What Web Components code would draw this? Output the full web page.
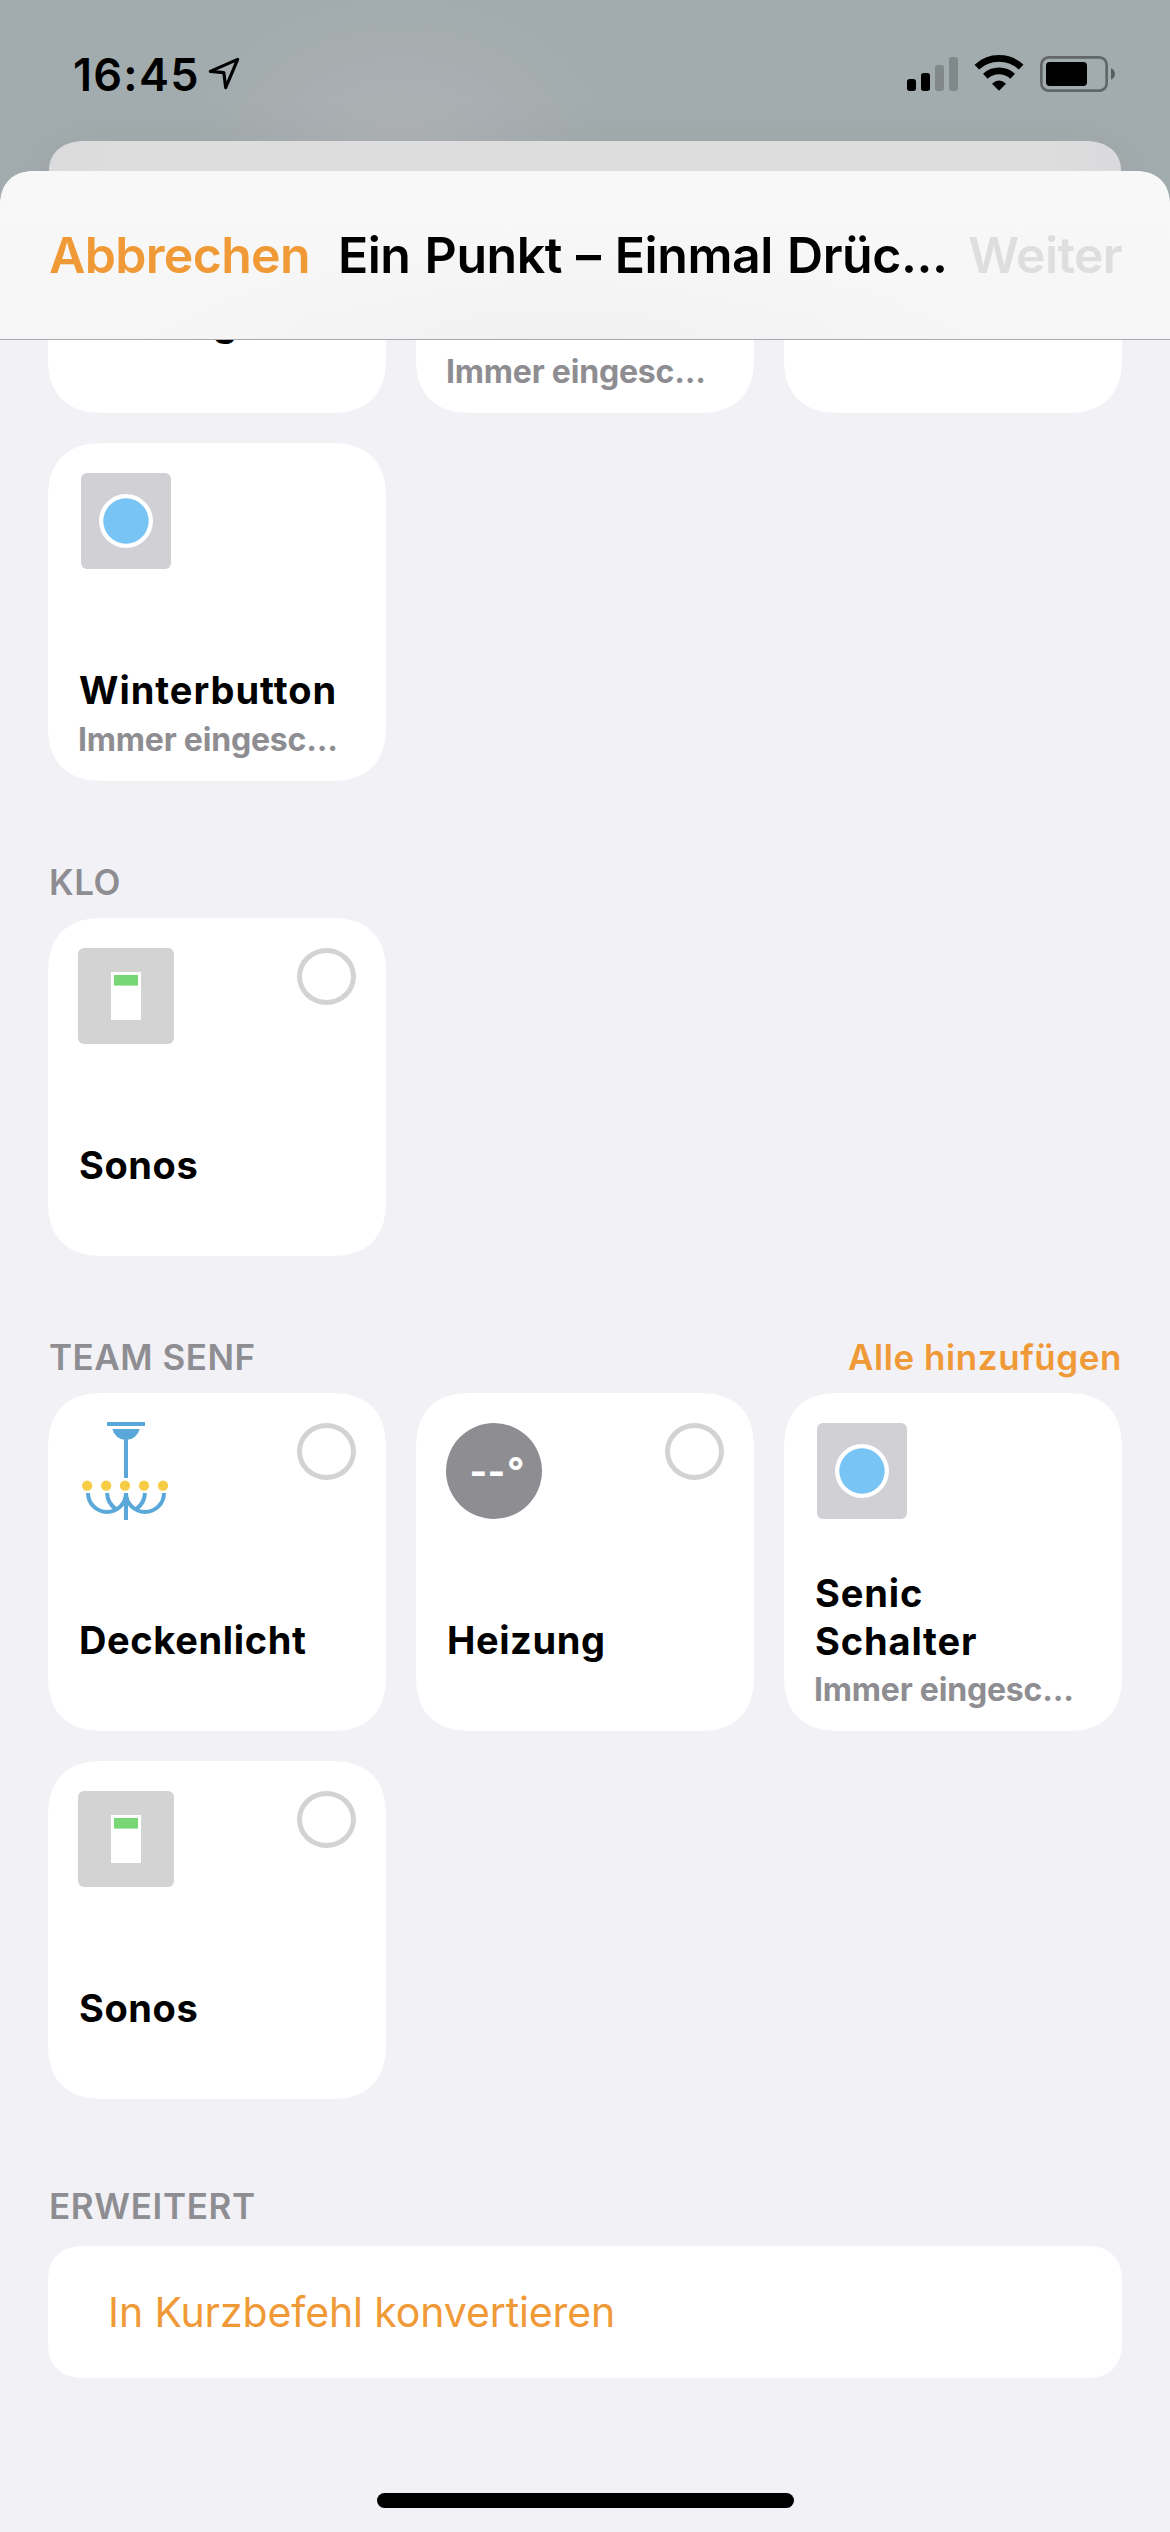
<!DOCTYPE html>
<html lang="de">
<head>
<meta charset="utf-8">
<title>Ein Punkt – Einmal Drücken</title>
<style>
  html, body { margin: 0; padding: 0; }
  body { width: 1170px; height: 2532px; overflow: hidden; font-family: Inter, "Liberation Sans", sans-serif; color: #000; }
</style>
</head>
<body>
<home-screen>
  <status-bar slot="status" time="16:45"></status-bar>
  <nav-bar slot="nav">
    <span slot="cancel">Abbrechen</span>
    <span slot="title">Ein Punkt – Einmal Drüc...</span>
    <span slot="next">Weiter</span>
  </nav-bar>

  <tile-grid>
    <accessory-tile name="Heizung" style="--track:.6px"></accessory-tile>
    <accessory-tile note="Immer eingesc..."></accessory-tile>
    <accessory-tile></accessory-tile>
    <accessory-tile name="Winterbutton" note="Immer eingesc..." style="--track:.98px"><device-icon kind="button"></device-icon></accessory-tile>
  </tile-grid>

  <section-head style="--track:.55px">KLO</section-head>
  <tile-grid>
    <accessory-tile name="Sonos" selectable><device-icon kind="switch"></device-icon></accessory-tile>
  </tile-grid>

  <section-head style="--track:.51px">TEAM SENF<span slot="action">Alle hinzufügen</span></section-head>
  <tile-grid>
    <accessory-tile name="Deckenlicht" selectable style="--track:.64px"><device-icon kind="chandelier"></device-icon></accessory-tile>
    <accessory-tile name="Heizung" selectable style="--track:.6px"><device-icon kind="thermostat"></device-icon></accessory-tile>
    <accessory-tile name="Senic Schalter" note="Immer eingesc..." style="--track:.86px;--gap:5px"><device-icon kind="button"></device-icon></accessory-tile>
    <accessory-tile name="Sonos" selectable><device-icon kind="switch"></device-icon></accessory-tile>
  </tile-grid>

  <section-head style="--track:.66px;--before:86px;--after:18px">ERWEITERT</section-head>
  <list-row>In Kurzbefehl konvertieren</list-row>
</home-screen>

<script>
class Base extends HTMLElement {
  connectedCallback() {
    if (this.shadowRoot) return;
    this.attachShadow({ mode: 'open' }).innerHTML = this.render();
  }
}

customElements.define('home-screen', class extends Base {
  render() {
    return `<style>
      :host { display: flex; flex-direction: column; width: 1170px; height: 2532px; position: relative; overflow: hidden;
        background: radial-gradient(ellipse 210px 150px at 400px 145px, #afb2b5 0%, rgba(173,178,181,.55) 50%, rgba(163,171,173,0) 100%), #a2abad; }
      .behind { flex: none; height: 30px; margin: 0 49px; background: linear-gradient(90deg, #dbdbdd, #dddddd 8%, #dddddd 92%, #dadadd);
        border-radius: 50px 50px 0 0 / 42px 42px 0 0; corner-shape: superellipse(1.15); box-shadow: 0 30px 70px rgba(0,20,25,.13); }
      .sheet { flex: 1; min-height: 0; display: flex; flex-direction: column; position: relative; overflow: hidden;
        background: #f1f1f6; border-radius: 37px 37px 0 0; corner-shape: superellipse(1.3); }
      .scroll { flex: 1; min-height: 0; overflow: hidden; }
      .list { display: flex; flex-direction: column; margin: -265px 48px 0; }
      .home { position: absolute; left: 377px; bottom: 24px; width: 417px; height: 15px; border-radius: 8px; background: #000; }
    </style>
    <slot name="status"></slot>
    <div class="behind"></div>
    <div class="sheet">
      <slot name="nav"></slot>
      <div class="scroll"><div class="list"><slot></slot></div></div>
      <div class="home"></div>
    </div>`;
  }
});

customElements.define('status-bar', class extends Base {
  render() {
    return `<style>
      :host { display: flex; flex: none; height: 141px; box-sizing: border-box; align-items: center; padding: 8px 35px 0 73px; }
      time { font-size: 45px; font-weight: 600; letter-spacing: 1.25px; line-height: 56px; width: 134px; white-space: nowrap; }
      svg { display: block; flex: none; }
      .spacer { flex: 1; }
    </style>
    <time>${this.getAttribute('time')}</time>
    <svg width="35" height="39" viewBox="441 30 105 117"><path d="M533 43L451 79L491.500 83L497 128Z" fill="none" stroke="#000" stroke-width="9.500" stroke-linejoin="round"/></svg>
    <div class="spacer"></div>
    <svg width="240" height="59" viewBox="0 0 720 177">
      <rect x="36" y="102" width="27" height="36" rx="8"/><rect x="78" y="84" width="27" height="54" rx="8"/>
      <g fill="#000" fill-opacity=".2"><rect x="120" y="60" width="27" height="78" rx="8"/><rect x="162" y="36" width="27" height="102" rx="8"/></g>
      <g fill="none" stroke="#000" stroke-width="20"><path d="M245.500 66.500A97 97 0 0 1 378.500 66.500"/><path d="M271 93.800A59.500 59.500 0 0 1 353 93.800"/></g>
      <path d="M312 137L291 116Q312 97 333 116Z"/>
      <rect x="439" y="37" width="196" height="100" rx="22" fill="none" stroke="#000" stroke-opacity=".4" stroke-width="8"/>
      <rect x="453" y="51" width="123" height="72" rx="11"/>
      <path d="M648 70Q660 76 660 87Q660 98 648 104Z" fill-opacity=".45"/>
    </svg>`;
  }
});

customElements.define('nav-bar', class extends Base {
  render() {
    return `<style>
      :host { display: flex; flex: none; align-items: center; height: 168px; padding: 0 48px 0 49px; font-size: 50px; line-height: 60px; white-space: nowrap;
        background: radial-gradient(ellipse 420px 110px at 560px 175px, #f1f1f1, rgba(241,241,241,0)), linear-gradient(#f8f8f8, #f6f6f6); border-bottom: 1px solid #a9a9af; }
      .cancel { color: #f09a37; font-weight: 600; letter-spacing: -.68px; }
      .title { flex: 1; margin-left: 28px; font-weight: 600; letter-spacing: -.45px; word-spacing: 2px; }
      .next { color: #dedede; font-weight: 600; letter-spacing: -.67px; }
    </style>
    <div class="cancel"><slot name="cancel"></slot></div>
    <div class="title"><slot name="title"></slot></div>
    <div class="next"><slot name="next"></slot></div>`;
  }
});

customElements.define('section-head', class extends Base {
  render() {
    return `<style>
      :host { display: flex; justify-content: space-between; margin: var(--before, 80px) 0 var(--after, 14px); padding-left: 1px;
        height: 43px; line-height: 43px; font-size: 35px; white-space: nowrap; }
      .label { color: #8e8d92; font-weight: 600; letter-spacing: var(--track, .7px); }
      .action { color: #f09a37; font-weight: 600; letter-spacing: .56px; }
    </style>
    <div class="label"><slot></slot></div><div class="action"><slot name="action"></slot></div>`;
  }
});

customElements.define('list-row', class extends Base {
  render() {
    return `<style>
      :host { display: flex; align-items: center; height: 132px; padding-left: 60px; background: #fff; border-radius: 37px; corner-shape: superellipse(1.3);
        color: #f09a37; font-size: 41px; line-height: 50px; letter-spacing: -.11px; white-space: nowrap; }
    </style><slot></slot>`;
  }
});

customElements.define('tile-grid', class extends Base {
  render() {
    return `<style>:host { display: grid; grid-template-columns: repeat(3, 338px); grid-auto-rows: 338px; gap: 30px; }</style><slot></slot>`;
  }
});

customElements.define('accessory-tile', class extends Base {
  render() {
    const name = this.getAttribute('name') || '', note = this.getAttribute('note') || '';
    return `<style>
      :host { display: flex; flex-direction: column; justify-content: space-between; box-sizing: border-box; padding: 30px 30px 21px; background: #fff;
        border-radius: 56px; corner-shape: superellipse(1.3); }
      .top { display: flex; justify-content: space-between; align-items: flex-start; }
      .ring { width: 59px; height: 57px; box-sizing: border-box; border: 5px solid #d3d3d3; border-radius: 50%; }
      .name { padding-left: 1px; margin-bottom: var(--gap, 6px); font-size: 38px; line-height: 48px; font-weight: 700; letter-spacing: var(--track, .59px); }
      .note { height: 40px; font-size: 32px; line-height: 40px; font-weight: 700; letter-spacing: -.2px; color: #8e8d92; white-space: nowrap; }
    </style>
    <div class="top"><slot></slot>${this.hasAttribute('selectable') ? '<div class="ring"></div>' : ''}</div>
    <div><div class="name">${name}</div><div class="note">${note}</div></div>`;
  }
});

const ICONS = {
  button: `<svg viewBox="0 0 96 96"><rect x="3" width="90" height="96" rx="6" fill="#d1d0d5"/><circle cx="48" cy="48" r="27" fill="#fff"/><circle cx="48" cy="48" r="22.700" fill="#78c4f5"/></svg>`,
  switch: `<svg viewBox="0 0 96 96"><rect width="96" height="96" rx="6" fill="#d3d3d3"/><path d="M33 24h30v48H33z" fill="#fff"/><path d="M36 27h24v10.600H36z" fill="#78d775"/></svg>`,
  chandelier: `<svg viewBox="144 279 288 288"><g fill="#5aa8d9"><path d="M231 276h114v12H231zM247 297h82A42 42 0 0 1 247 297zM282 325h12v119h-12zM282 489h12v81h-12z"/></g>
    <g fill="none" stroke="#5aa8d9" stroke-width="12"><path d="M174 489A57 57 0 0 0 288 489M288 489A57 57 0 0 0 402 489M231 489Q233 520 257 537M345 489Q343 520 319 537"/></g>
    <g fill="#f7cd46"><circle cx="171.500" cy="467" r="15.500"/><circle cx="228.500" cy="467" r="15.500"/><circle cx="285" cy="467" r="15.500"/><circle cx="342" cy="467" r="15.500"/><circle cx="399" cy="467" r="15.500"/></g></svg>`,
  thermostat: `<svg viewBox="0 0 96 96"><circle cx="48" cy="48" r="48" fill="#8e8d92"/><text x="23.500 41.500 61" y="62" font-size="38" font-weight="700" fill="#fff">--°</text></svg>`
};
customElements.define('device-icon', class extends Base {
  render() {
    return `<style>:host { display: block; width: 96px; height: 96px; } svg { display: block; width: 96px; height: 96px; overflow: visible; }</style>${ICONS[this.getAttribute('kind')]}`;
  }
});
</script>
</body>
</html>
